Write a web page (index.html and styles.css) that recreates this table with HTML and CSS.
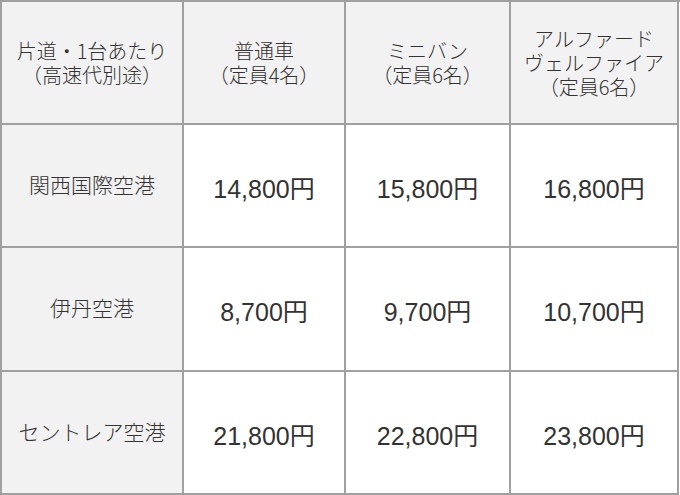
FILE: index.html
```html
<!DOCTYPE html>
<html lang="ja">
<head>
<meta charset="utf-8">
<link rel="stylesheet" href="styles.css">
</head>
<body>
<div class="price-table">
  <div class="cell head">片道・1台あたり<br>（高速代別途）</div>
  <div class="cell head">普通車<br>（定員4名）</div>
  <div class="cell head">ミニバン<br>（定員6名）</div>
  <div class="cell head">アルファード<br>ヴェルファイア<br>（定員6名）</div>

  <div class="cell label">関西国際空港</div>
  <div class="cell price">14,800円</div>
  <div class="cell price">15,800円</div>
  <div class="cell price">16,800円</div>

  <div class="cell label">伊丹空港</div>
  <div class="cell price">8,700円</div>
  <div class="cell price">9,700円</div>
  <div class="cell price">10,700円</div>

  <div class="cell label">セントレア空港</div>
  <div class="cell price">21,800円</div>
  <div class="cell price">22,800円</div>
  <div class="cell price">23,800円</div>
</div>
</body>
</html>
```
FILE: styles.css
```css
html, body {
  margin: 0;
  padding: 0;
  background: #ffffff;
}

body {
  font-family: "Liberation Sans", "Noto Sans CJK JP", sans-serif;
  color: #333333;
}

.price-table {
  display: grid;
  grid-template-columns: 182px 162px 165px 168px;
  grid-template-rows: 123px 123px 124px 123px;
  width: 679px;
  border-top: 2px solid #a0a0a0;
  border-left: 2px solid #a0a0a0;
}

.cell {
  box-sizing: border-box;
  border-right: 2px solid #a0a0a0;
  border-bottom: 2px solid #a0a0a0;
  display: flex;
  align-items: center;
  justify-content: center;
  text-align: center;
}

.head {
  background: #f2f2f2;
  font-family: "Noto Sans CJK JP", "Liberation Sans", sans-serif;
  font-size: 20px;
  line-height: 24px;
  font-weight: 300;
}

.label {
  background: #f2f2f2;
  font-family: "Noto Sans CJK JP", "Liberation Sans", sans-serif;
  font-size: 21px;
  line-height: 24px;
  font-weight: 300;
  padding-bottom: 4px;
}

.price {
  background: #ffffff;
  font-size: 25px;
  line-height: 28px;
  padding-top: 6px;
}
```
